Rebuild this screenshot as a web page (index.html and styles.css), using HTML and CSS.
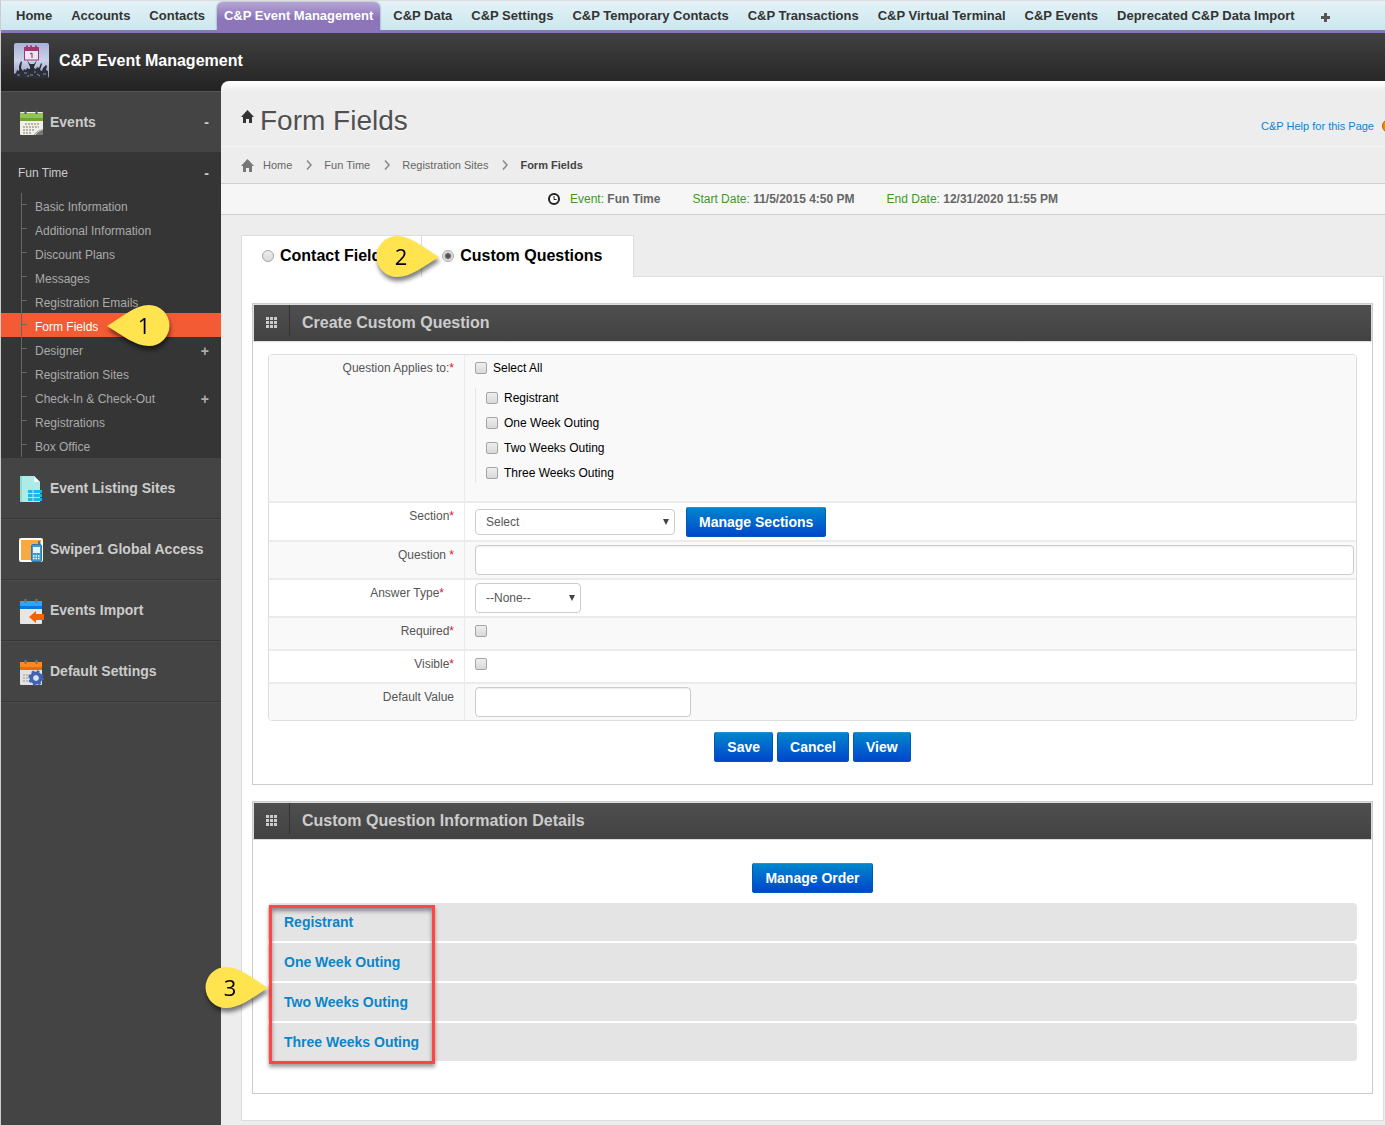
FILE: index.html
```
<!DOCTYPE html>
<html lang="en">
<head>
    <meta charset="UTF-8">
    <meta name="viewport" content="width=device-width, initial-scale=1.0">
    <title>Form Fields</title>
    <link rel="stylesheet" href="styles.css">
</head>
<body>

    <!-- Top tabs -->
    <nav class="tab-bar">
        <a href="#">Home</a>
        <a href="#">Accounts</a>
        <a href="#">Contacts</a>
        <a href="#" class="active">C&amp;P Event Management</a>
        <a href="#">C&amp;P Data</a>
        <a href="#">C&amp;P Settings</a>
        <a href="#">C&amp;P Temporary Contacts</a>
        <a href="#">C&amp;P Transactions</a>
        <a href="#">C&amp;P Virtual Terminal</a>
        <a href="#">C&amp;P Events</a>
        <a href="#">Deprecated C&amp;P Data Import</a>
        <a href="#" class="add-tab" aria-label="All tabs"><svg width="9" height="9" viewBox="0 0 9 9"><path d="M3 0h3v3h3v3H6v3H3V6H0V3h3z" fill="#555"/></svg></a>
    </nav>

    <!-- App header -->
    <header class="app-header">
        <svg class="app-logo" width="35" height="35" viewBox="0 0 35 35">
            <defs><linearGradient id="logoBg" x1="0" y1="0" x2="0" y2="1"><stop offset="0" stop-color="#a9b2d6"/><stop offset="0.5" stop-color="#ccd2ea"/><stop offset="1" stop-color="#8d96ba"/></linearGradient></defs>
            <rect width="35" height="35" rx="2" fill="url(#logoBg)"/>
            <rect x="10.5" y="5" width="14" height="12" fill="#e6e9f5" stroke="#a8336f"/>
            <path d="M10 4h15v4H10zM12 2.500h2v2h-2zM16 2.500h2v2h-2zM21 2.500h2v2h-2z" fill="#a8336f"/>
            <path d="M16 11l2-1v5" fill="none" stroke="#8a2b5c"/>
            <path d="M13 17l3 7v11h4V24l3-7-3 4h-4z" fill="#2c2f3a"/>
            <path d="M0 35v-4l2-1 1-3 2 1v-5l2-5 1 1-1 6 2 3 1-2 2 1 1-2 2 1h3l2-1 2 1 1-2 2 1 2-5 1 1-2 6 2 1 1-3 3-3 1 1-1 4 2 1v7z" fill="#2c2f3a"/>
            <path d="M3 32h3M10 30h3M16 32h3M23 31l3 2M29 31h3M13 33h2M20 29h2" stroke="#8890ae"/>
        </svg>
        <span>C&amp;P Event Management</span>
    </header>

    <div class="layout">

        <!-- Left menu -->
        <aside class="sidebar">
            <a href="#" class="menu-item">
                <svg width="26" height="28" viewBox="0 0 26 28">
                    <rect x="1" y="3" width="23" height="23" rx="1" fill="#f0efe8"/>
                    <path d="M1 4h23v7H1z" fill="#8fc653"/><path d="M1 9h23v3H1z" fill="#6fa534"/>
                    <path d="M6.500 1v4M17.500 1v4" stroke="#555" stroke-width="2"/>
                    <path d="M6 15h14M4 18h16M4 21h12M4 24h8" stroke="#b5b3aa" stroke-width="2" stroke-dasharray="2 1"/>
                    <path d="M15 26q3-5 9-6v6z" fill="#777"/><path d="M16 26q1-3 8-6" stroke="#ddd" fill="none"/>
                </svg>
                <span>Events</span>
                <span class="toggle">-</span>
            </a>
            <div class="submenu">
                <a href="#" class="submenu-title"><span>Fun Time</span><span class="toggle">-</span></a>
                <ul class="submenu-list">
                    <li><a href="#">Basic Information</a></li>
                    <li><a href="#">Additional Information</a></li>
                    <li><a href="#">Discount Plans</a></li>
                    <li><a href="#">Messages</a></li>
                    <li><a href="#">Registration Emails</a></li>
                    <li class="active">
                        <a href="#">Form Fields</a>
                        <div class="callout callout-1">
                            <svg width="63" height="42" viewBox="0 0 63 42"><path d="M0 21C15 12 28 0 42 0a20.500 20.500 0 0 1 0 41C28 41 15 30 0 21z" fill="#ffe44f"/></svg>
                            <span>1</span>
                        </div>
                    </li>
                    <li><a href="#">Designer<span class="toggle">+</span></a></li>
                    <li><a href="#">Registration Sites</a></li>
                    <li><a href="#">Check-In &amp; Check-Out<span class="toggle">+</span></a></li>
                    <li><a href="#">Registrations</a></li>
                    <li><a href="#">Box Office</a></li>
                </ul>
            </div>
            <a href="#" class="menu-item">
                <svg width="26" height="28" viewBox="0 0 26 28">
                    <path d="M1 1h14l6 6v20H1z" fill="#aeeae6"/><path d="M15 1l6 6h-6z" fill="#e9fbfa"/><path d="M1 1h2v26H1z" fill="#8edbd7"/>
                    <path d="M9 15h14v3H9zM9 19h14v3H9zM9 23h14v3H9z" fill="#1cb5ea"/><path d="M14 15v11" stroke="#aeeae6"/>
                </svg>
                <span>Event Listing Sites</span>
            </a>
            <a href="#" class="menu-item">
                <svg width="26" height="28" viewBox="0 0 26 28">
                    <rect x="1" y="3" width="22" height="22" rx="1" fill="#f9a942" stroke="#fff" stroke-width="2"/>
                    <path d="M19 5h2v5h-2z" fill="#2f7fb8"/><rect x="12.500" y="8.500" width="10" height="17" rx="1.500" fill="#3e9ad3" stroke="#2b77ad"/>
                    <path d="M14 11h7v6h-7z" fill="#e3f4fd"/><path d="M14 20h7M14 22.500h7" stroke="#fff" stroke-width="1.500" stroke-dasharray="1.500 1"/>
                </svg>
                <span>Swiper1 Global Access</span>
            </a>
            <a href="#" class="menu-item">
                <svg width="26" height="28" viewBox="0 0 26 28">
                    <rect x="1" y="4" width="22" height="23" rx="1" fill="#e6e6e6"/><path d="M1 4h22v6H1z" fill="#2fa5fa"/><path d="M1 9h22v3H1z" fill="#0879d8"/>
                    <path d="M6.500 2v4M17.500 2v4" stroke="#777" stroke-width="2"/>
                    <path d="M10 20l7-6v3h8v6h-8v3z" fill="#f26400"/>
                </svg>
                <span>Events Import</span>
            </a>
            <a href="#" class="menu-item">
                <svg width="26" height="28" viewBox="0 0 26 28">
                    <rect x="1" y="4" width="22" height="23" rx="1" fill="#e2e2e2"/><path d="M1 4h22v6H1z" fill="#ff8726"/><path d="M1 9h22v3H1z" fill="#ee6813"/>
                    <path d="M6.500 2v4M17.500 2v4" stroke="#777" stroke-width="2"/>
                    <path d="M4 17h8M4 20h8M4 23h8" stroke="#bbb" stroke-width="2" stroke-dasharray="2 1"/>
                    <circle cx="17" cy="20" r="4.500" fill="none" stroke="#3f63b5" stroke-width="4"/>
                    <circle cx="17" cy="20" r="6.500" fill="none" stroke="#3f63b5" stroke-width="2.500" stroke-dasharray="2.600 2.505"/>
                    <circle cx="17" cy="20" r="2.700" fill="#e2e2e2"/>
                </svg>
                <span>Default Settings</span>
            </a>
        </aside>

        <!-- Page -->
        <main class="main">
            <div class="page-head">
                <svg width="13" height="13" viewBox="0 0 13 13"><path d="M6.500 0L13 7h-2v6H8V9H5v4H2V7H0z" fill="#333"/></svg>
                <h1>Form Fields</h1>
                <a href="#" class="help-link">C&amp;P Help for this Page
                    <svg width="14" height="14" viewBox="0 0 14 14"><circle cx="7" cy="7" r="6.500" fill="#ef8d0b" stroke="#a8620a"/></svg>
                </a>
            </div>

            <nav class="breadcrumb">
                <svg class="home" width="13" height="13" viewBox="0 0 13 13"><path d="M6.500 0L13 7h-2v6H8V9H5v4H2V7H0z" fill="#777"/></svg>
                <a href="#">Home</a>
                <svg class="sep" width="6" height="10" viewBox="0 0 6 10"><path d="M1 .5L5 5 1 9.500" fill="none" stroke="#888" stroke-width="1.500"/></svg>
                <a href="#">Fun Time</a>
                <svg class="sep" width="6" height="10" viewBox="0 0 6 10"><path d="M1 .5L5 5 1 9.500" fill="none" stroke="#888" stroke-width="1.500"/></svg>
                <a href="#">Registration Sites</a>
                <svg class="sep" width="6" height="10" viewBox="0 0 6 10"><path d="M1 .5L5 5 1 9.500" fill="none" stroke="#888" stroke-width="1.500"/></svg>
                <b>Form Fields</b>
            </nav>

            <div class="event-bar">
                <span class="event-info">
                    <svg width="12" height="12" viewBox="0 0 12 12"><circle cx="6" cy="6" r="5" fill="#fff" stroke="#222" stroke-width="2"/><path d="M6 3v3.500h2.500" fill="none" stroke="#222"/></svg>
                    <span>Event: <b>Fun Time</b></span>
                </span>
                <span>Start Date: <b>11/5/2015 4:50 PM</b></span>
                <span>End Date: <b>12/31/2020 11:55 PM</b></span>
            </div>

            <div class="content">
                <div class="field-tabs">
                    <label><input type="radio" name="fieldType">Contact Fields</label>
                    <label><input type="radio" name="fieldType" checked>Custom Questions</label>
                    <div class="callout callout-2">
                        <svg width="63" height="42" viewBox="0 0 63 42"><path d="M63 21C48 12 35 0 21 0a20.500 20.500 0 0 0 0 41C35 41 48 30 63 21z" fill="#ffe44f"/></svg>
                        <span>2</span>
                    </div>
                </div>

                <div class="panel">
                    <!-- Create question form -->
                    <section class="box">
                        <div class="box-head">
                            <span class="grid-icon"><svg width="11" height="11" viewBox="0 0 11 11"><path d="M0 0h3v3H0zM4 0h3v3H4zM8 0h3v3H8zM0 4h3v3H0zM4 4h3v3H4zM8 4h3v3H8zM0 8h3v3H0zM4 8h3v3H4zM8 8h3v3H8z" fill="#ccc"/></svg></span>
                            <h2>Create Custom Question</h2>
                        </div>
                        <form class="question-form">
                            <div class="form-table">
                                <div class="form-row">
                                    <div class="label">Question Applies to:<i>*</i></div>
                                    <div class="field applies">
                                        <label class="check"><input type="checkbox">Select All</label>
                                        <div class="check-list">
                                            <label class="check"><input type="checkbox">Registrant</label>
                                            <label class="check"><input type="checkbox">One Week Outing</label>
                                            <label class="check"><input type="checkbox">Two Weeks Outing</label>
                                            <label class="check"><input type="checkbox">Three Weeks Outing</label>
                                        </div>
                                    </div>
                                </div>
                                <div class="form-row">
                                    <label class="label" for="section">Section<i>*</i></label>
                                    <div class="field inline">
                                        <span class="select section-select"><select id="section"><option>Select</option></select></span>
                                        <button type="button" class="btn">Manage Sections</button>
                                    </div>
                                </div>
                                <div class="form-row">
                                    <label class="label" for="question">Question <i>*</i></label>
                                    <div class="field"><input type="text" id="question" class="wide"></div>
                                </div>
                                <div class="form-row">
                                    <label class="label answer-label" for="answerType">Answer Type<i>*</i></label>
                                    <div class="field"><span class="select answer-select"><select id="answerType"><option>--None--</option></select></span></div>
                                </div>
                                <div class="form-row check-row">
                                    <label class="label" for="required">Required<i>*</i></label>
                                    <div class="field"><span class="check"><input type="checkbox" id="required"></span></div>
                                </div>
                                <div class="form-row check-row">
                                    <label class="label" for="visible">Visible<i>*</i></label>
                                    <div class="field"><span class="check"><input type="checkbox" id="visible"></span></div>
                                </div>
                                <div class="form-row">
                                    <label class="label" for="defaultValue">Default Value</label>
                                    <div class="field"><input type="text" id="defaultValue"></div>
                                </div>
                            </div>
                            <div class="form-buttons">
                                <button type="button" class="btn">Save</button>
                                <button type="button" class="btn">Cancel</button>
                                <button type="button" class="btn">View</button>
                            </div>
                        </form>
                    </section>

                    <!-- Existing questions -->
                    <section class="box">
                        <div class="box-head">
                            <span class="grid-icon"><svg width="11" height="11" viewBox="0 0 11 11"><path d="M0 0h3v3H0zM4 0h3v3H4zM8 0h3v3H8zM0 4h3v3H0zM4 4h3v3H4zM8 4h3v3H8zM0 8h3v3H0zM4 8h3v3H4zM8 8h3v3H8z" fill="#ccc"/></svg></span>
                            <h2>Custom Question Information Details</h2>
                        </div>
                        <div class="details">
                            <button type="button" class="btn">Manage Order</button>
                            <div class="details-list">
                                <a href="#">Registrant</a>
                                <a href="#">One Week Outing</a>
                                <a href="#">Two Weeks Outing</a>
                                <a href="#">Three Weeks Outing</a>
                                <div class="highlight"></div>
                                <div class="callout callout-3">
                                    <svg width="63" height="42" viewBox="0 0 63 42"><path d="M63 21C48 12 35 0 21 0a20.500 20.500 0 0 0 0 41C35 41 48 30 63 21z" fill="#ffe44f"/></svg>
                                    <span>3</span>
                                </div>
                            </div>
                        </div>
                    </section>
                </div>
            </div>
        </main>
    </div>

</body>
</html>
```
FILE: styles.css
```
* {
    box-sizing: border-box;
}

body {
    margin: 0;
    min-height: 100vh;
    display: flex;
    flex-direction: column;
    border-top: 1px solid #ddd;
    border-left: 1px solid #ccc;
    background-color: #ededed;
    color: #555;
    font-family: Arial, "Liberation Sans", sans-serif;
    font-size: 12px;
    line-height: 20px;
    overflow-x: hidden;
}

a {
    color: inherit;
    text-decoration: none;
}

svg {
    display: block;
    flex-shrink: 0;
}

/* Top tabs */
.tab-bar {
    display: flex;
    height: 32px;
    padding-left: 5px;
    border-bottom: 3px solid #8c75b9;
    background: linear-gradient(#e3f2f7, #cbe7ee);
    color: #333;
    font-size: 13px;
    font-weight: bold;
    line-height: 30px;
    white-space: nowrap;
}

.tab-bar a {
    padding: 0 9px 0 10px;
}

.tab-bar .active {
    margin: 1px 3px 0;
    padding: 0 7px;
    border-radius: 6px 6px 0 0;
    background: linear-gradient(#b5a5d6, #8c75b9 60%);
    box-shadow: 0 0 2px #777;
    clip-path: inset(-2px -2px 0);
    color: white;
    line-height: 28px;
}

.tab-bar .add-tab {
    padding: 12px 17px;
}

/* App header */
.app-header {
    display: flex;
    align-items: center;
    gap: 10px;
    height: 59px;
    padding: 0 13px 3px;
    background: linear-gradient(#414141, #222);
    border-bottom: 1px solid #555;
    color: white;
    font-size: 16px;
    font-weight: bold;
}

.layout {
    display: flex;
    flex: 1;
}

/* Left menu */
.sidebar {
    width: 220px;
    flex-shrink: 0;
    background-color: #444;
    color: #ccc;
}

.menu-item {
    display: flex;
    align-items: center;
    gap: 5px;
    height: 61px;
    padding: 0 12px 0 18px;
    border-bottom: 1px solid #373737;
    box-shadow: 0 1px #4b4b4b;
    font-size: 14px;
    font-weight: bold;
    white-space: nowrap;
}

.menu-item svg {
    margin-top: 2px;
}

.toggle {
    margin-left: auto;
    font-size: 14px;
    font-weight: bold;
}

.submenu {
    position: relative;
    padding-bottom: 1px;
    background-color: #353535;
}

.submenu-title {
    display: flex;
    align-items: center;
    height: 40px;
    padding: 0 12px 0 17px;
}

.submenu-list {
    margin: 0;
    padding: 0;
    list-style: none;
    color: #aaa;
}

.submenu-list li {
    position: relative;
}

.submenu-list a {
    display: flex;
    height: 24px;
    padding: 0 12px 0 34px;
    line-height: 28px;
}

/* Tree lines */
.submenu-list li::before {
    content: "";
    position: absolute;
    left: 20px;
    top: 0;
    width: 1px;
    height: 24px;
    background-color: #666;
}

.submenu-list li::after {
    content: "";
    position: absolute;
    left: 21px;
    top: 11px;
    width: 5px;
    height: 1px;
    background-color: #666;
}

.submenu-list .active {
    background-color: #f35b34;
    color: white;
}

/* Page */
.main {
    position: relative;
    flex: 1;
    min-width: 0;
    margin-top: -11px;
    border-top-left-radius: 8px;
    background: linear-gradient(white, #ededed 11px);
}

.page-head {
    display: flex;
    height: 66px;
    padding: 29px 0 0 20px;
    overflow: hidden;
    border-bottom: 1px solid #f4f4f4;
}

.page-head h1 {
    margin: -5px 0 0 6px;
    color: #505050;
    font-size: 28px;
    font-weight: normal;
    line-height: 32px;
    text-shadow: 0 1px white;
}

.help-link {
    display: flex;
    gap: 8px;
    align-items: center;
    height: 32px;
    margin: 0 -11px 0 auto;
    color: #1082c8;
    font-size: 11px;
}

.breadcrumb {
    display: flex;
    align-items: center;
    height: 37px;
    padding-left: 20px;
    border-bottom: 1px solid #d0d0d0;
    color: #666;
    font-size: 11px;
}

.breadcrumb .home {
    margin-right: 9px;
}

.breadcrumb .sep {
    margin: 0 12px 0 14px;
}

.breadcrumb b {
    color: #444;
}

.event-bar {
    display: flex;
    justify-content: center;
    align-items: center;
    gap: 32px;
    height: 31px;
    border-bottom: 1px solid #d0d0d0;
    background-color: #f6f6f6;
    color: #3c9a1e;
}

.event-info {
    display: flex;
    align-items: center;
    gap: 10px;
}

.event-bar b {
    color: #666;
}

.content {
    padding: 20px 1px 4px 20px;
}

/* Contact / custom tabs */
.field-tabs {
    position: relative;
    z-index: 1;
    display: flex;
    width: fit-content;
    height: 42px;
    margin-bottom: -1px;
    border: 1px solid #ddd;
    border-bottom: 0;
    background-color: white;
    color: black;
    font-size: 16px;
    font-weight: bold;
}

.field-tabs label {
    display: flex;
    align-items: center;
    gap: 6px;
    padding: 0 31px 2px 20px;
}

.field-tabs label + label {
    border-left: 1px solid #ddd;
}

input[type="radio"],
input[type="checkbox"] {
    appearance: none;
    flex-shrink: 0;
    width: 12px;
    height: 12px;
    margin: 0;
    border: 1px solid #a5a5a5;
    border-radius: 2px;
    background: linear-gradient(#eee, #d9d9d9);
}

input[type="radio"] {
    border-radius: 50%;
}

input[type="radio"]:checked {
    background: radial-gradient(#555 2px, #e4e4e4 4px);
}

.panel {
    padding: 26px 10px;
    border: 1px solid #ddd;
    background-color: white;
}

.box {
    border: 1px solid #ccc;
}

.box + .box {
    margin-top: 16px;
}

.box-head {
    display: flex;
    height: 38px;
    border: 1px solid #ddd;
    background: linear-gradient(#4f4f4f, #424242);
    color: #ccc;
}

.grid-icon {
    width: 36px;
    height: 31px;
    padding: 12px 0 0 12px;
    border-right: 1px solid #333;
}

.box-head h2 {
    margin: 0;
    padding-left: 12px;
    font-size: 16px;
    line-height: 36px;
}

/* Question form */
.question-form {
    padding: 12px 15px 22px;
}

.form-table {
    overflow: hidden;
    border: 1px solid #ddd;
    border-radius: 4px;
}

.form-row {
    display: flex;
    min-height: 38px;
    border-bottom: 2px solid #ebebeb;
}

.form-row:nth-child(odd) {
    background-color: #f9f9f9;
}

.form-row:last-child {
    min-height: 36px;
    border-bottom: 0;
}

.form-row.check-row {
    min-height: 33px;
}

.label {
    width: 196px;
    flex-shrink: 0;
    padding: 3px 10px;
    border-right: 1px solid #ebebeb;
    text-align: right;
}

.answer-label {
    padding-right: 20px;
}

.label i {
    color: #d11a2a;
    font-style: normal;
}

.field {
    flex: 1;
    padding: 3px 2px 3px 10px;
}

.inline {
    display: flex;
    align-items: center;
    gap: 11px;
    padding-top: 4px;
}

.check {
    display: flex;
    align-items: center;
    gap: 6px;
    height: 20px;
    color: black;
}

.applies {
    padding-bottom: 13px;
}

.check-list {
    margin-top: 10px;
    padding-left: 10px;
    border-left: 1px solid #e5e5e5;
}

.check-list .check {
    margin-bottom: 5px;
}

input[type="text"],
select {
    display: block;
    height: 30px;
    padding: 4px 10px;
    border: 1px solid #ccc;
    border-radius: 4px;
    background-color: white;
    color: #555;
    font-family: inherit;
    font-size: 12px;
}

input[type="text"] {
    width: 216px;
    box-shadow: inset 0 1px 1px #eee;
}

input.wide {
    width: 100%;
}

select {
    appearance: none;
    width: 100%;
}

.select {
    display: block;
    position: relative;
}

.select::after {
    content: "";
    position: absolute;
    right: 6px;
    top: 50%;
    margin-top: -3px;
    border: 3px solid transparent;
    border-top: 6px solid #444;
    border-bottom: 0;
}

.section-select {
    width: 200px;
}

.section-select select {
    height: 26px;
    padding: 0 10px;
}

.answer-select {
    width: 106px;
}

.btn {
    height: 30px;
    padding: 0 13px;
    border: 0;
    border-radius: 3px;
    background: linear-gradient(#0088cc, #0044cc);
    box-shadow: inset 0 1px #2d8fc9, inset 0 0 0 1px #0058b8;
    color: white;
    font-family: inherit;
    font-size: 14px;
    font-weight: bold;
    cursor: pointer;
}

.form-buttons {
    display: flex;
    justify-content: center;
    gap: 4px;
    margin-top: 11px;
}

/* Question list */
.details {
    padding: 23px 15px 32px;
    text-align: center;
}

.details-list {
    position: relative;
    display: flex;
    flex-direction: column;
    gap: 2px;
    margin-top: 10px;
    text-align: left;
}

.details-list a {
    height: 38px;
    padding-left: 16px;
    border-radius: 4px;
    background-color: #e4e4e4;
    color: #0b84c8;
    font-size: 14px;
    font-weight: bold;
    line-height: 38px;
}

.details .btn {
    display: block;
    margin: 0 auto;
}

.highlight {
    position: absolute;
    left: 1px;
    top: 2px;
    width: 166px;
    height: 159px;
    border: 3px solid #ff4545;
    box-shadow: 0 3px 4px rgba(0, 0, 0, 0.4), inset 0 3px 4px rgba(0, 0, 0, 0.4);
}

/* Numbered callouts */
.callout {
    position: absolute;
    z-index: 5;
    width: 63px;
    height: 42px;
    color: black;
    font-family: "Open Sans", "Noto Sans", sans-serif;
    font-size: 22px;
    font-weight: normal;
    filter: drop-shadow(1px 4px 2px rgba(0, 0, 0, 0.5));
}

.callout span {
    position: absolute;
    top: 0;
    left: 4px;
    width: 42px;
    line-height: 40px;
    text-align: center;
}

.callout-1 {
    left: 106px;
    top: -8px;
}

.callout-1 span {
    left: 16px;
}

.callout-2 {
    left: 134px;
    top: 0;
}

.callout-3 {
    left: -63px;
    top: 64px;
}
```
